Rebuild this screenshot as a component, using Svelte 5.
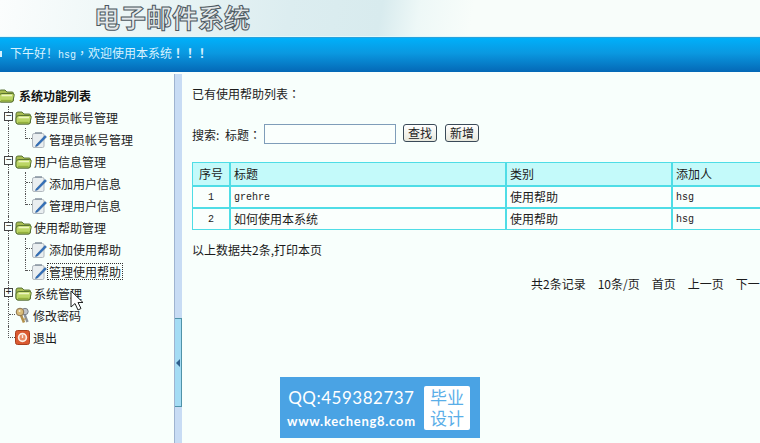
<script>
	const tree = [
		{ kind: 'group', label: '管理员帐号管理', open: true },
		{ kind: 'child', label: '管理员帐号管理', last: true },
		{ kind: 'group', label: '用户信息管理', open: true },
		{ kind: 'child', label: '添加用户信息' },
		{ kind: 'child', label: '管理用户信息', last: true },
		{ kind: 'group', label: '使用帮助管理', open: true },
		{ kind: 'child', label: '添加使用帮助' },
		{ kind: 'child', label: '管理使用帮助', last: true, focus: true },
		{ kind: 'group', label: '系统管理', open: false },
		{ kind: 'keys', label: '修改密码' },
		{ kind: 'exit', label: '退出' }
	];

	const rows = [
		{ id: 1, title: 'grehre', latin: true, type: '使用帮助', by: 'hsg' },
		{ id: 2, title: '如何使用本系统', latin: false, type: '使用帮助', by: 'hsg' }
	];
</script>

{#snippet folder()}
	<svg class="folder" viewBox="0 0 17 15" width="17" height="15">
		<path d="M1 4 Q1 2 3 2 H7 L9 4 H14 Q15.500 4 15.500 5.500 V12 Q15.500 14 13.500 14 H3 Q1 14 1 12 Z" fill="#a8bd52" stroke="#4f6a2a" stroke-width=".9" />
		<path d="M1 8 Q1.500 5.500 4 5.500 H14.500 Q16.700 5.500 16.200 7.500 L15 12.500 Q14.700 14 13 14 H3 Q1 14 1 12 Z" fill="#bcd665" stroke="#4f6a2a" stroke-width=".9" />
		<path d="M3.500 7.500 H14" stroke="#edf6c0" stroke-width="1.600" />
		<path d="M3 12.500 H13.500" stroke="#93b03c" stroke-width="1.400" />
	</svg>
{/snippet}

{#snippet note()}
	<svg class="note" viewBox="0 0 16 17" width="16" height="17">
		<rect x="1.500" y="2.500" width="11.500" height="14" rx="1.500" fill="#e9eef0" stroke="#b0b8be" />
		<path d="M4 2 H11" stroke="#8d99a4" stroke-width="1.600" />
		<path d="M5 14 L14 4.500 L15.500 6 L6.500 15 L4.500 15.500 Z" fill="#2f6fbb" stroke="#25558f" stroke-width=".5" />
	</svg>
{/snippet}

{#snippet keys()}
	<svg class="leaf-icon" viewBox="0 0 15 17" width="15" height="17">
		<path d="M9 6 L12.500 15" stroke="#8d939b" stroke-width="2.400" />
		<circle cx="10" cy="4.500" r="3.200" fill="#bfc3c8" stroke="#7b8189" />
		<path d="M5.500 7 L9 15.500" stroke="#b3914c" stroke-width="2.600" />
		<circle cx="5" cy="5" r="3.800" fill="#d8bb78" stroke="#8a7350" />
		<circle cx="4.500" cy="4" r="1" fill="#f6efdc" />
		<path d="M8.500 12.500 L11 11.500" stroke="#b3914c" stroke-width="1.200" />
	</svg>
{/snippet}

{#snippet power()}
	<svg class="leaf-icon" viewBox="0 0 15 15" width="15" height="15">
		<rect x=".5" y=".5" width="14" height="14" rx="2" fill="#da5a30" stroke="#a8401e" />
		<circle cx="7.500" cy="7.500" r="3.900" fill="#e98a62" stroke="#fbeee4" stroke-width="1.700" />
		<path d="M7.500 5 V8" stroke="#fbeee4" stroke-width="1.400" />
	</svg>
{/snippet}

<div class="page">
	<header class="banner">
		<h1>电子邮件系统</h1>
	</header>

	<div class="welcome">
		<i class="bullet"></i>
		<span>下午好！<span class="mono">hsg</span><span class="fw">，</span>欢迎使用本系统<b class="fw">！！！</b></span>
	</div>

	<div class="body">
		<aside class="sidebar">
			<div class="tree-row root">
				{@render folder()}
				<strong>系统功能列表</strong>
			</div>
			{#each tree as item, i}
				<div class="tree-row">
					{#if i === tree.length - 1}
						<span class="elbow-main"></span>
					{:else if item.kind === 'keys'}
						<span class="guide tee"><span class="tick"></span></span>
					{:else}
						<span class="guide">
							{#if item.kind === 'group'}
								<span class="toggle">{item.open ? '−' : '+'}</span>
							{/if}
						</span>
					{/if}

					{#if item.kind === 'group'}
						{@render folder()}
						<span class="label group-label">{item.label}</span>
					{:else if item.kind === 'child'}
						<span class="branch" class:last={item.last}><span class="tick"></span></span>
						{@render note()}
						<span class="label child-label" class:focus={item.focus}>{item.label}</span>
					{:else if item.kind === 'keys'}
						{@render keys()}
						<span class="label leaf-label">{item.label}</span>
					{:else}
						{@render power()}
						<span class="label leaf-label">{item.label}</span>
					{/if}
				</div>
			{/each}
			<svg class="cursor" viewBox="0 0 14 22" width="14" height="22">
				<path d="M1 1 V17 L5 13.500 L8 20 L11 18.500 L8 12.500 H13 Z" fill="#fff" stroke="#222" stroke-width="1" />
			</svg>
		</aside>

		<div class="splitter">
			<div class="handle"><i></i></div>
		</div>

		<main class="content">
			<p class="heading">已有使用帮助列表<span class="fw">：</span></p>

			<form class="search">
				<span class="search-label">搜索: 标题<span class="fw">：</span></span>
				<input type="text" />
				<button type="button">查找</button>
				<button type="button">新增</button>
			</form>

			<table>
				<thead>
					<tr>
						<th class="c-id">序号</th>
						<th class="c-title">标题</th>
						<th class="c-type">类别</th>
						<th class="c-by">添加人</th>
					</tr>
				</thead>
				<tbody>
					{#each rows as row}
						<tr>
							<td class="c-id mono">{row.id}</td>
							<td class:mono={row.latin}>{row.title}</td>
							<td>{row.type}</td>
							<td class="mono">{row.by}</td>
						</tr>
					{/each}
				</tbody>
			</table>

			<p class="summary">以上数据共2条,打印本页</p>

			<div class="pager">
				<span>共2条记录</span>
				<span>10条/页</span>
				<span>首页</span>
				<span>上一页</span>
				<span>下一页</span>
			</div>
		</main>
	</div>

	<aside class="promo">
		<div class="promo-text">
			<div class="qq">QQ:459382737</div>
			<div class="site">www.kecheng8.com</div>
		</div>
		<div class="promo-badge">毕业<br />设计</div>
	</aside>
</div>

<style>
	:global(body) {
		margin: 0;
		background: #f8fffc;
	}

	.page {
		position: relative;
		width: 760px;
		height: 443px;
		overflow: hidden;
		display: flex;
		flex-direction: column;
		font-family: "Noto Sans CJK SC", "Liberation Sans", sans-serif;
		font-size: 12px;
		color: #1c1c1c;
		background: #f8fffc;
	}

	.fw {
		font-family: "Noto Sans CJK TC", sans-serif;
	}

	.banner {
		height: 37px;
		flex: none;
		box-sizing: border-box;
		border-bottom: 1px solid #dff8fb;
		background: linear-gradient(100deg, #fbfdfd 0%, #eef7f7 15%, #dcedf0 38%, #d8ebee 50%, #eef8f7 55%, #f8fdfa 62%, #f8fdfa 100%);
	}

	h1 {
		margin: 0;
		padding: 0 0 0 94px;
		font-size: 26px;
		line-height: 33px;
		font-weight: 700;
		color: #e4e8ea;
		-webkit-text-stroke: 1px #4c585f;
	}

	.welcome {
		height: 35px;
		flex: none;
		display: flex;
		align-items: center;
		gap: 8px;
		padding-bottom: 2px;
		box-sizing: border-box;
		color: #d8f2ff;
		line-height: 1;
		border-top: 1px solid #2aa2dc;
		background: linear-gradient(#00b0fa 0%, #0a98e0 45%, #0468b6 100%);
	}

	.bullet {
		width: 2px;
		height: 6px;
		background: #d8f2ff;
	}

	.mono {
		font-family: "Liberation Mono", "Noto Sans CJK SC", monospace;
		font-size: 10px;
	}

	.body {
		flex: 1;
		display: flex;
		min-height: 0;
		padding-top: 2px;
	}

	.sidebar {
		position: relative;
		width: 174px;
		flex: none;
		padding-top: 10px;
		box-sizing: border-box;
	}

	.tree-row {
		height: 22px;
		display: flex;
		align-items: center;
		white-space: nowrap;
	}

	.root {
		margin-left: -2px;
	}

	.root strong {
		margin-left: 4px;
		font-size: 12px;
		color: #111;
	}

	.folder {
		flex: none;
	}

	.guide {
		position: relative;
		flex: none;
		align-self: stretch;
		width: 6px;
		margin-left: 8px;
		border-left: 1px dotted #555;
	}

	.toggle {
		position: absolute;
		left: -5px;
		top: 6px;
		width: 9px;
		height: 9px;
		box-sizing: border-box;
		border: 1px solid #444;
		background: #f8fffc;
		font: 10px/7px "Liberation Mono", monospace;
		text-align: center;
		color: #222;
	}

	.tick {
		display: block;
		width: 6px;
		height: 11px;
		box-sizing: border-box;
		border-bottom: 1px dotted #555;
	}

	.elbow-main {
		flex: none;
		align-self: flex-start;
		width: 6px;
		height: 11px;
		margin-left: 8px;
		border-left: 1px dotted #555;
		border-bottom: 1px dotted #555;
	}

	.branch {
		flex: none;
		align-self: stretch;
		width: 5px;
		margin-left: 10px;
		border-left: 1px dotted #555;
	}

	.branch.last {
		align-self: flex-start;
		height: 11px;
	}

	.label {
		line-height: 15px;
	}

	.group-label {
		margin-left: 2px;
	}

	.child-label {
		padding: 0 1px;
		border: 1px dotted transparent;
	}

	.child-label.focus {
		border-color: #333;
	}

	.leaf-label {
		margin-left: 3px;
	}

	.cursor {
		position: absolute;
		left: 70px;
		top: 216px;
	}

	.splitter {
		width: 8px;
		flex: none;
		display: flex;
		align-items: flex-start;
		box-sizing: border-box;
		border-left: 1px solid #9fb4d0;
		background: #c8dcf4;
		padding-top: 244px;
	}

	.handle {
		width: 7px;
		height: 89px;
		box-sizing: border-box;
		display: flex;
		align-items: center;
		background: #a4dcf4;
		border: 1px solid #4f93a8;
		border-left: none;
	}

	.handle i {
		width: 0;
		height: 0;
		margin-left: 1px;
		border-top: 4px solid transparent;
		border-bottom: 4px solid transparent;
		border-right: 4px solid #2d5f8c;
	}

	.content {
		flex: 1;
		min-width: 0;
		padding: 11px 0 0 10px;
	}

	.heading {
		margin: 0;
		line-height: 18px;
	}

	.search {
		display: flex;
		align-items: center;
		margin-top: 20px;
		height: 22px;
	}

	.search-label {
		width: 72px;
		flex: none;
		word-spacing: 3px;
	}

	input {
		width: 132px;
		height: 20px;
		box-sizing: border-box;
		margin: 0;
		padding: 0;
		border: 1px solid #7f9db9;
		background: #fafffd;
	}

	button {
		height: 18px;
		width: 34px;
		margin: -2px 0 0 8px;
		padding: 0;
		border: 1px solid #3a4a58;
		border-radius: 3px;
		background: linear-gradient(#fff, #e8e8dc);
		font: inherit;
		line-height: 14px;
		color: #222;
	}

	button:first-of-type {
		margin-left: 7px;
	}

	table {
		margin-top: 17px;
		width: 610px;
		table-layout: fixed;
		border-collapse: collapse;
		border: 1px solid #4fdde6;
	}

	th, td {
		height: 20px;
		padding: 0 0 0 3px;
		border-left: 2px solid #4fdde6;
		border-bottom: 2px solid #4fdde6;
		font-weight: 400;
		text-align: left;
		line-height: 16px;
	}

	td.mono {
		line-height: 18px;
		vertical-align: bottom;
	}

	tr:last-child td {
		border-bottom: none;
	}

	th {
		height: 22px;
		background: #c4fafa;
	}

	td {
		background: #fafffd;
	}

	.c-id {
		width: 36px;
		padding: 0;
		text-align: center;
		border-left: none;
	}

	.c-title {
		width: 271px;
	}

	.c-type {
		width: 161px;
	}

	.summary {
		margin: 12px 0 0;
		line-height: 16px;
	}

	.pager {
		display: flex;
		gap: 12px;
		margin-top: 18px;
		padding-left: 339px;
		line-height: 16px;
		white-space: nowrap;
	}

	.promo {
		position: absolute;
		left: 280px;
		top: 377px;
		width: 200px;
		height: 61px;
		display: flex;
		align-items: center;
		justify-content: space-between;
		padding: 0 10px 0 7px;
		box-sizing: border-box;
		background: #4aa3e4;
		color: #fff;
	}

	.promo-text {
		text-align: center;
		font-family: "Lato", "Open Sans", sans-serif;
	}

	.qq {
		font-size: 17px;
		line-height: 22px;
		letter-spacing: .5px;
	}

	.site {
		margin-top: 5px;
		font-size: 13px;
		font-weight: 700;
		line-height: 15px;
		letter-spacing: .7px;
	}

	.promo-badge {
		width: 46px;
		height: 44px;
		box-sizing: border-box;
		border-radius: 2px;
		background: #fff;
		color: #5aaee8;
		font-size: 17px;
		line-height: 21px;
		text-align: center;
	}
</style>
